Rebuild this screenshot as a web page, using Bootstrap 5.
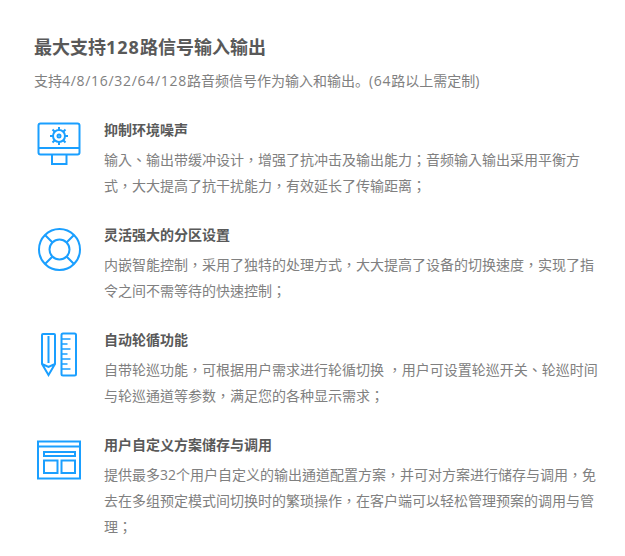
<!DOCTYPE html>
<html lang="zh"><head><meta charset="utf-8">
<link href="https://cdn.jsdelivr.net/npm/bootstrap@5.3.0/dist/css/bootstrap.min.css" rel="stylesheet">
<style>
body{background:#fff;font-family:"Open Sans","Noto Sans CJK SC",sans-serif;color:#808080;overflow:hidden}
.sheet{padding:35px 20px 0 34px}
.main-title{font-size:18px;font-weight:700;color:#595959;line-height:24px;margin:0 0 9px}
.sub-title{font-size:14px;line-height:26px;color:#808080;margin:0 0 26px}
.feature{margin-bottom:26px}
.ico{width:70px;flex:none;padding-top:1px}
.ico svg{display:block;width:48px;height:46px;fill:none;stroke:#1a9fff;stroke-width:2}
.feat-h{font-size:14px;font-weight:700;color:#595959;line-height:20px;margin:0 0 7px}
.feat-p{font-family:"Open Sans","Noto Sans CJK TC",sans-serif;font-size:14px;line-height:26px;color:#808080;margin:0}
.wide-latin{letter-spacing:.7px}
.wide-bold{letter-spacing:1px}
</style></head><body>
<div class="sheet">
<h1 class="main-title">最大支持<span class="wide-bold">128</span>路信号输入输出</h1>
<p class="sub-title">支持<span class="wide-latin">4/8/16/32/64/128</span>路音频信号作为输入和输出。<span class="wide-latin">(64</span>路以上需定制<span class="wide-latin">)</span></p>

<div class="feature d-flex">
<div class="ico"><svg viewBox="0 0 48 46"><rect x="4.500" y="2.500" width="41" height="31" rx="2"/><path d="M4.500 27h41M18 33.500v9.500h14.500v-9.500"/><circle cx="25" cy="15" r="6"/><circle cx="25" cy="15" r="1.500"/><path d="M25 6v3M25 21v3M16 15h3M31 15h3M18.500 8.500l2 2M29.500 19.500l2 2M31.500 8.500l-2 2M20.500 19.500l-2 2"/></svg></div>
<div><h2 class="feat-h">抑制环境噪声</h2><p class="feat-p" lang="zh-TW">输入、输出带缓冲设计，增强了抗冲击及输出能力；音频输入输出采用平衡方式，大大提高了抗干扰能力，有效延长了传输距离；</p></div>
</div>

<div class="feature d-flex">
<div class="ico"><svg viewBox="0 0 48 46"><circle cx="25.500" cy="23.500" r="20.500"/><circle cx="25.500" cy="23.500" r="10"/><path d="M11 9l7.500 7.500M40 9l-7.500 7.500M11 38l7.500-7.500M40 38l-7.500-7.500"/></svg></div>
<div><h2 class="feat-h">灵活强大的分区设置</h2><p class="feat-p" lang="zh-TW">内嵌智能控制，采用了独特的处理方式，大大提高了设备的切换速度，实现了指令之间不需等待的快速控制；</p></div>
</div>

<div class="feature d-flex">
<div class="ico"><svg viewBox="0 0 48 46"><path d="M9 3h11a1 1 0 0 1 1 1v29l-6.500 11L8 33V4a1 1 0 0 1 1-1zM14.500 5v27M8 33l6.500 3 6.500-3"/><rect x="27.500" y="2.500" width="14.500" height="42" rx="1.500"/><path d="M27.500 8h9M27.500 13h6M27.500 18h9M27.500 23h6M27.500 28h9M27.500 33h6M27.500 38h9" stroke-width="1.500"/></svg></div>
<div><h2 class="feat-h">自动轮循功能</h2><p class="feat-p" lang="zh-TW">自带轮巡功能，可根据用户需求进行轮循切换 ，用户可设置轮巡开关、轮巡时间与轮巡通道等参数，满足您的各种显示需求；</p></div>
</div>

<div class="feature d-flex">
<div class="ico"><svg viewBox="0 0 48 46"><rect x="4" y="5.500" width="42" height="37"/><path d="M4 10.500h42"/><rect x="10" y="16" width="31" height="4"/><rect x="10" y="24.500" width="13.500" height="12.500"/><rect x="27.500" y="24.500" width="13.500" height="12.500"/></svg></div>
<div><h2 class="feat-h">用户自定义方案储存与调用</h2><p class="feat-p" lang="zh-TW">提供最多32个用户自定义的输出通道配置方案，并可对方案进行储存与调用，免去在多组预定模式间切换时的繁琐操作，在客户端可以轻松管理预案的调用与管理；</p></div>
</div>
</div>
</body></html>
